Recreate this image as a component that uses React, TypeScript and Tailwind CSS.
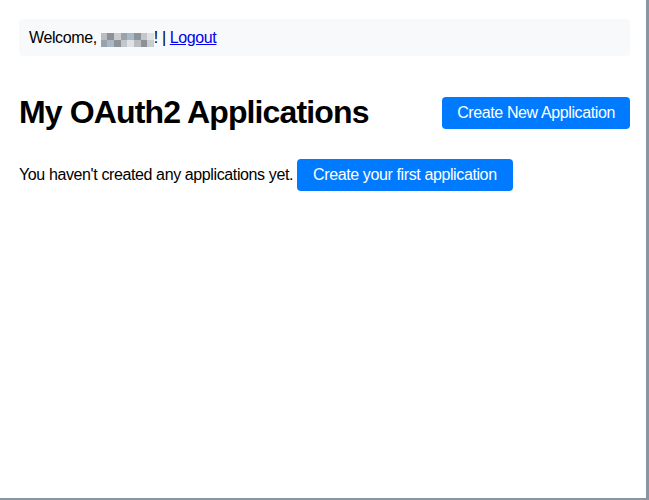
import React from "react";

const blur = ["#b9bcc0", "#8d9196", "#c9ccd0", "#9aa3ab", "#a9b8c6", "#8e9399", "#c3c6ca", "#dfe1e3"];

function HiddenName() {
  return (
    <span className="inline-flex h-[14px] w-[53px] translate-y-[2px] overflow-hidden align-baseline">
      {blur.map((c, i) => (
        <span key={i} className="flex h-full flex-1 flex-col">
          <span className="flex-1" style={{ backgroundColor: c }} />
          <span className="flex-1" style={{ backgroundColor: blur[(i + 3) % blur.length] }} />
        </span>
      ))}
    </span>
  );
}

export default function App() {
  return (
    <div className="h-[500px] w-[649px] overflow-hidden border-r-[3px] border-b-[2px] border-[#8796a3] bg-white font-['Liberation_Sans',Arial,sans-serif] tracking-[-0.024em] text-black">
      <div className="ml-[19px] w-[611px]">
        <div className="mt-[19px] flex h-[37px] items-center rounded-[4px] bg-[#f8f9fa] px-[10px] text-base">
          <span>Welcome,&nbsp;</span>
          <HiddenName />
          <span>! |&nbsp;</span>
          <a href="#" className="text-[#0000ee] underline">
            Logout
          </a>
        </div>

        <div className="mt-[38px] flex items-center justify-between">
          <h1 className="text-[32px] leading-[37px] font-bold tracking-[-0.027em]">My OAuth2 Applications</h1>
          <button className="h-[32px] rounded-[4px] bg-[#007bff] px-[15px] text-base text-white">
            Create New Application
          </button>
        </div>

        <div className="mt-[27px] flex h-[33px] items-center text-base">
          <span>You haven't created any applications yet.</span>
          <button className="ml-[4px] h-[32px] rounded-[4px] bg-[#007bff] px-[16px] text-base text-white">
            Create your first application
          </button>
        </div>
      </div>
    </div>
  );
}
